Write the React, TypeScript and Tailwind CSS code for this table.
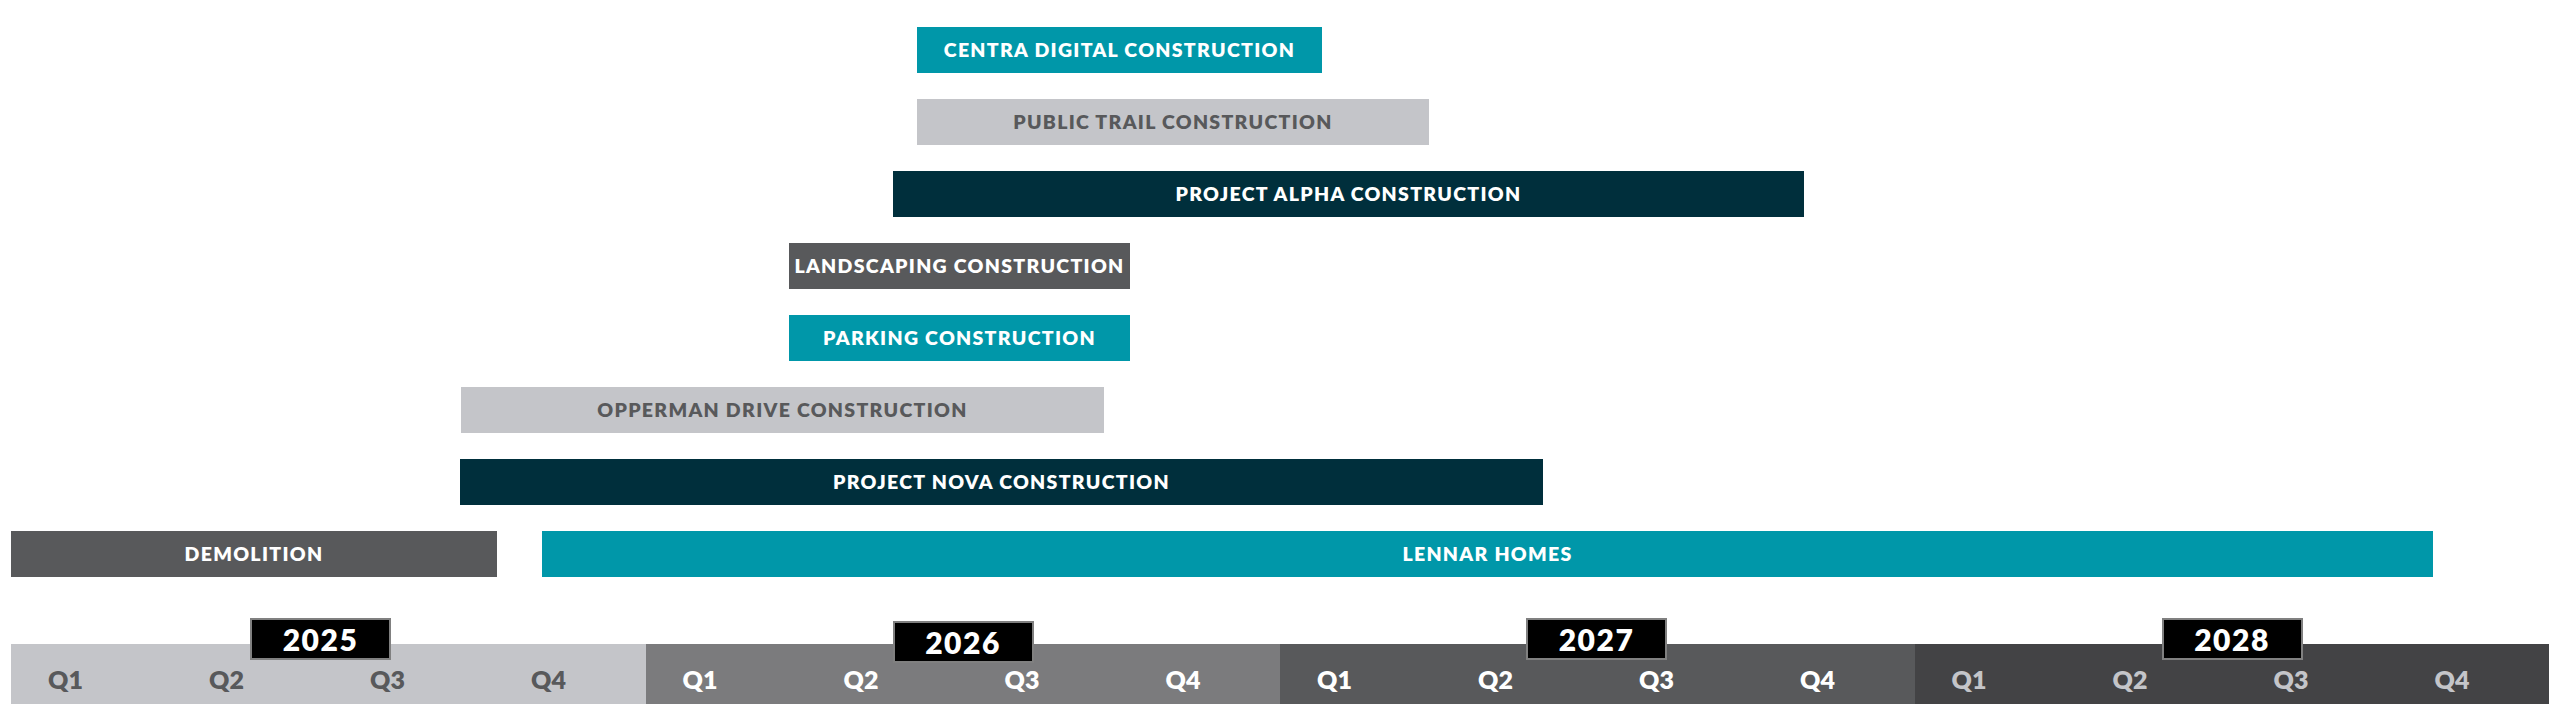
const bars = [
  { label: "CENTRA DIGITAL CONSTRUCTION", cls: "ml-[906px] w-[405px] bg-[#0097a9] text-white" },
  { label: "PUBLIC TRAIL CONSTRUCTION", cls: "ml-[906px] w-[512px] bg-[#c4c5c9] text-[#58595b]" },
  { label: "PROJECT ALPHA CONSTRUCTION", cls: "ml-[882px] w-[911px] bg-[#002f3c] text-white" },
  { label: "LANDSCAPING CONSTRUCTION", cls: "ml-[778px] w-[341px] bg-[#58595b] text-white" },
  { label: "PARKING CONSTRUCTION", cls: "ml-[778px] w-[341px] bg-[#0097a9] text-white" },
  { label: "OPPERMAN DRIVE CONSTRUCTION", cls: "ml-[450px] w-[643px] bg-[#c4c5c9] text-[#58595b]" },
  { label: "PROJECT NOVA CONSTRUCTION", cls: "ml-[449px] w-[1083px] bg-[#002f3c] text-white" },
];

const years = [
  { year: "2025", bg: "bg-[#c4c5c9]", text: "text-[#58595b]", badge: "left-[239px] -top-[26px]" },
  { year: "2026", bg: "bg-[#7b7b7d]", text: "text-white", badge: "left-[247px] -top-[23px]" },
  { year: "2027", bg: "bg-[#58595b]", text: "text-white", badge: "left-[246px] -top-[26px]" },
  { year: "2028", bg: "bg-[#434345]", text: "text-[#c4c5c9]", badge: "left-[247px] -top-[26px]" },
];

const quarters = ["Q1", "Q2", "Q3", "Q4"];

const Bar = ({ label, cls }: { label: string; cls: string }) => (
  <div
    className={`${cls} h-[46px] shrink-0 flex items-center justify-center text-[19.5px] font-extrabold tracking-[1.3px] whitespace-nowrap`}
  >
    {label}
  </div>
);

export default function App() {
  return (
    <div
      className="w-[2560px] h-[724px] bg-white px-[11px] pt-[27px]"
      style={{ fontFamily: "Lato, 'Open Sans', sans-serif" }}
    >
      {/* gantt rows */}
      <div className="flex flex-col gap-[26px]">
        {bars.map((b) => (
          <div key={b.label} className="flex">
            <Bar label={b.label} cls={b.cls} />
          </div>
        ))}
        <div className="flex">
          <Bar label="DEMOLITION" cls="w-[486px] bg-[#58595b] text-white" />
          <Bar label="LENNAR HOMES" cls="ml-[45px] w-[1891px] bg-[#0097a9] text-white" />
        </div>
      </div>

      {/* timeline */}
      <div className="mt-[67px] grid grid-cols-4">
        {years.map((y) => (
          <div key={y.year} className={`relative h-[60px] ${y.bg}`}>
            <div className="flex h-full items-center pl-[37px] pt-[10px]">
              {quarters.map((q) => (
                <div
                  key={q}
                  className={`w-[161px] shrink-0 last:w-auto text-[25px] font-extrabold leading-none ${y.text}`}
                >
                  {q}
                </div>
              ))}
            </div>
            <div
              className={`absolute ${y.badge} w-[141px] h-[42px] bg-black border-2 border-[#808080] flex items-center justify-center text-white text-[30px] font-extrabold tracking-[1.5px] leading-none`}
            >
              {y.year}
            </div>
          </div>
        ))}
      </div>
    </div>
  );
}
